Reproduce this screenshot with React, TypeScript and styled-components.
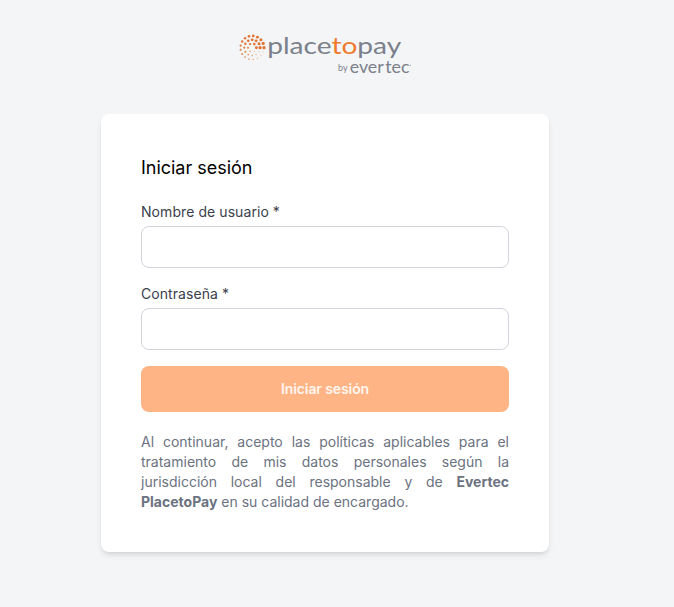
import React from "react";
import styled, { createGlobalStyle } from "styled-components";

const GlobalStyle = createGlobalStyle`
  *, *::before, *::after { box-sizing: border-box; }
  body {
    margin: 0;
    background: #f3f5f7;
    font-family: Inter, "Liberation Sans", sans-serif;
    line-height: 1.5;
    overflow: hidden;
  }
`;

const Page = styled.main`
  display: flex;
  flex-direction: column;
  align-items: center;
  width: 650px;
  min-height: 607px;
  padding-top: 28px;
`;

const LogoSvg = styled.svg`
  display: block;
  width: 180px;
  height: 54px;
`;

const Wordmark = styled.text<{ $size: number }>`
  font-family: Lato, sans-serif;
  font-size: ${(p) => p.$size}px;
  fill: #7b808a;
`;

const Accent = styled.tspan`
  fill: #ef7a2d;
`;

const Card = styled.section`
  width: 448px;
  height: 438px;
  margin-top: 32px;
  padding: 40px;
  background: #fff;
  border-radius: 8px;
  box-shadow: 0 4px 6px -1px rgba(0, 0, 0, 0.1), 0 2px 4px -2px rgba(0, 0, 0, 0.1);
`;

const Title = styled.h1`
  margin: 0 0 20px;
  color: #000;
  font-size: 18px;
  font-weight: 400;
  letter-spacing: -0.02px;
  line-height: 28px;
`;

const Form = styled.form`
  display: flex;
  flex-direction: column;
  gap: 16px;
`;

const Field = styled.label`
  display: flex;
  flex-direction: column;
  gap: 4px;
  color: #3b404c;
  font-size: 14px;
  font-weight: 400;
  letter-spacing: 0.07px;
  line-height: 20px;
`;

const Input = styled.input`
  width: 100%;
  height: 42px;
  padding: 8px 12px;
  border: 1px solid #d1d5db;
  border-radius: 8px;
  background: #fff;
  font: inherit;
  outline: none;
`;

const SubmitButton = styled.button`
  height: 46px;
  border: 0;
  border-radius: 8px;
  background: #ffb485;
  color: #fff6ef;
  font-family: inherit;
  font-size: 14px;
  font-weight: 600;
  letter-spacing: -0.1px;
  line-height: 20px;
`;

const Terms = styled.p`
  margin: 20px 0 0;
  color: #6b7280;
  font-size: 14px;
  line-height: 20px;
  text-align: justify;
`;

const Strong = styled.strong`
  font-weight: 700;
`;

const rings = [
  { radius: 11.8, count: 17, scale: 0.95 },
  { radius: 7.9, count: 12, scale: 0.95 },
  { radius: 4.2, count: 6, scale: 0.85 },
];

const dots = rings.flatMap(({ radius, count, scale }) =>
  Array.from({ length: count }, (_, i) => {
    const t = i / count;
    const angle = t * Math.PI * 2;
    return {
      x: 17.2 + radius * Math.cos(angle),
      y: 19.7 - radius * Math.sin(angle),
      r: (1.75 - 1.2 * t) * scale,
      opacity: t < 0.45 ? 1 : 1 - (t - 0.45) * 1.35,
    };
  })
);

const Logo = () => (
  <LogoSvg viewBox="0 0 180 54" role="img" aria-label="placetopay by evertec">
    {dots.map((d, i) => (
      <circle key={i} cx={d.x} cy={d.y} r={d.r} opacity={d.opacity} fill="#e27434" />
    ))}
    <Wordmark $size={24} x="32.2" y="26" textLength="134" lengthAdjust="spacingAndGlyphs">
      place<Accent>to</Accent>pay
    </Wordmark>
    <Wordmark $size={9.5} x="103" y="43" textLength="9.5" lengthAdjust="spacingAndGlyphs">
      by
    </Wordmark>
    <Wordmark $size={16.5} x="114.7" y="44.6" textLength="59.8" lengthAdjust="spacingAndGlyphs">
      ever<tspan dx="1.5">tec</tspan>
    </Wordmark>
    <circle cx="175.3" cy="37.3" r="0.5" fill="#7b808a" />
  </LogoSvg>
);

export default function App() {
  return (
    <>
      <GlobalStyle />
      <Page>
        <Logo />
        <Card>
          <Title>Iniciar sesión</Title>
          <Form onSubmit={(e: React.FormEvent) => e.preventDefault()}>
            <Field>
              Nombre de usuario *
              <Input type="text" />
            </Field>
            <Field>
              Contraseña *
              <Input type="password" />
            </Field>
            <SubmitButton type="submit">Iniciar sesión</SubmitButton>
          </Form>
          <Terms>
            Al continuar, acepto las políticas aplicables para el tratamiento de mis datos
            personales según la jurisdicción local del responsable y de{" "}
            <Strong>Evertec PlacetoPay</Strong> en su calidad de encargado.
          </Terms>
        </Card>
      </Page>
    </>
  );
}
